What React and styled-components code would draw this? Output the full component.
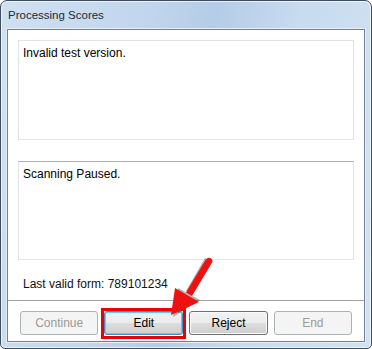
import React from "react";
import styled, { createGlobalStyle } from "styled-components";

const Global = createGlobalStyle`
  html, body {
    margin: 0;
    padding: 0;
    background: #ffffff;
  }
  body {
    font-family: "Liberation Sans", Arial, sans-serif;
    font-size: 12px;
  }
`;

const Window = styled.div`
  position: relative;
  width: 372px;
  height: 349px;
  box-sizing: border-box;
  border: 1px solid #3d4b5c;
  border-radius: 7px 7px 5px 5px;
  background: linear-gradient(100deg, #cfe0f1 0%, #c1d6ec 35%, #b4cce6 50%, #c8dbef 70%, #d2e2f2 100%);
  display: flex;
  flex-direction: column;
  box-shadow: inset 0 0 0 1px rgba(255, 255, 255, 0.7);
`;

const TitleBar = styled.div`
  height: 28px;
  padding: 0 0 0 7px;
  display: flex;
  align-items: center;
  color: #1e2a36;
  font-size: 11.5px;
`;

const Client = styled.div`
  flex: 1;
  margin: 0 6px 6px 6px;
  border: 1px solid #6f8297;
  background: #ffffff;
  display: flex;
  flex-direction: column;
  box-shadow: 0 0 0 1px #e6eef7;
`;

const Body = styled.div`
  padding: 10px 10px 0 10px;
  display: flex;
  flex-direction: column;
`;

const TextBox = styled.div`
  height: ${(p) => p.h}px;
  margin-bottom: ${(p) => p.gap}px;
  box-sizing: border-box;
  border: 1px solid #e2e3ea;
  border-top-color: ${(p) => (p.dark ? "#abadb3" : "#dfe2e8")};
  border-bottom-color: #e3e9ef;
  padding: 5px 4px;
  color: #000000;
  line-height: 15px;
`;

const Label = styled.div`
  padding: 0 0 8px 5px;
  color: #111111;
  line-height: 15px;
`;

const Separator = styled.div`
  height: 1px;
  background: #a0a0a0;
`;

const ButtonRow = styled.div`
  display: flex;
  gap: 6px;
  padding: 10px 12px 0 12px;
`;

const Button = styled.button`
  width: 79px;
  height: 24px;
  box-sizing: border-box;
  border-radius: 3px;
  font-family: "Liberation Sans", Arial, sans-serif;
  font-size: 12px;
  padding: 0;
  border: 1px solid ${(p) => (p.disabled ? "#adb2b5" : p.focus ? "#3c8fc4" : "#707070")};
  color: ${(p) => (p.disabled ? "#9a9a9a" : "#000000")};
  background: ${(p) =>
    p.disabled
      ? "#f4f4f4"
      : "linear-gradient(to bottom, #f2f2f2 0%, #ebebeb 50%, #dddddd 51%, #cfcfcf 100%)"};
  box-shadow: ${(p) =>
    p.focus ? "inset 0 0 0 1px #5ad0f0" : p.disabled ? "none" : "inset 0 0 0 1px #fcfcfc"};
`;

const Highlight = styled.div`
  border: 3px solid #ee0000;
  margin: -3px -3px -4px -3px;
  padding: 0 0 1px 0;
  display: flex;
`;

const Arrow = styled.svg`
  position: absolute;
  left: 160px;
  top: 252px;
  pointer-events: none;
`;

export default function App() {
  return (
    <>
      <Global />
      <Window>
        <TitleBar>Processing Scores</TitleBar>
        <Client>
          <Body>
            <TextBox h={100} gap={21}>Invalid test version.</TextBox>
            <TextBox h={99} gap={17} dark>
              Scanning Paused.
            </TextBox>
            <Label>Last valid form: 789101234</Label>
          </Body>
          <Separator />
          <ButtonRow>
            <Button disabled>Continue</Button>
            <Highlight>
              <Button focus>Edit</Button>
            </Highlight>
            <Button>Reject</Button>
            <Button disabled>End</Button>
          </ButtonRow>
        </Client>
        <Arrow width="60" height="70" viewBox="0 0 60 70">
          <g transform="translate(2 2)" fill="#555555" opacity="0.45">
            <path d="M47 6 L28 39 L23 36 L42 3 Z" />
            <path d="M15 33 L37 45 L10 62 Z" />
          </g>
          <path d="M50.5 10.5 L31 43 L25 39.5 L44.5 7 Q47.5 3 50.5 6 Q52.5 8 50.5 10.5 Z" fill="#ee1111" />
          <path d="M14 35 L38 49 L10 62 Z" fill="#ee1111" />
        </Arrow>
      </Window>
    </>
  );
}
